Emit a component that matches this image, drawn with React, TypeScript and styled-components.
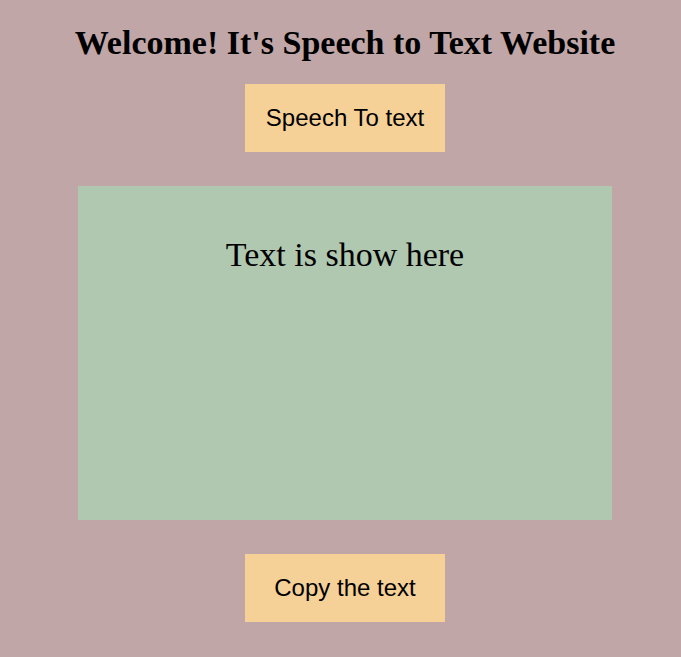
import React from "react";
import styled, { createGlobalStyle } from "styled-components";

const Global = createGlobalStyle`
  html, body {
    margin: 0;
    padding: 0;
    background: #c0a6a6;
  }
  body {
    min-height: 657px;
  }
`;

const Page = styled.main`
  display: flex;
  flex-direction: column;
  align-items: center;
  padding: 0 0 35px 9px;
  min-height: 657px;
  box-sizing: border-box;
`;

const Title = styled.h1`
  margin: 24px 0 22px;
  font-family: "Liberation Serif", "Times New Roman", serif;
  font-weight: bold;
  font-size: 34px;
  line-height: 38px;
  color: #000;
  text-align: center;
`;

const ActionButton = styled.button`
  width: 200px;
  height: 68px;
  border: none;
  background: #f5d097;
  font-family: "Liberation Sans", Arial, sans-serif;
  font-size: 24px;
  color: #000;
  padding: 0;
  cursor: pointer;
`;

const TextPanel = styled.section`
  width: 534px;
  height: 334px;
  margin: 34px 0;
  background: #b0c7b0;
  box-sizing: border-box;
  padding-top: 49px;
  text-align: center;
  font-family: "Liberation Serif", "Times New Roman", serif;
  font-size: 34px;
  line-height: 40px;
  color: #000;
`;

export default function App() {
  return (
    <>
      <Global />
      <Page>
        <Title>Welcome! It's Speech to Text Website</Title>
        <ActionButton>Speech To text</ActionButton>
        <TextPanel>Text is show here</TextPanel>
        <ActionButton>Copy the text</ActionButton>
      </Page>
    </>
  );
}
